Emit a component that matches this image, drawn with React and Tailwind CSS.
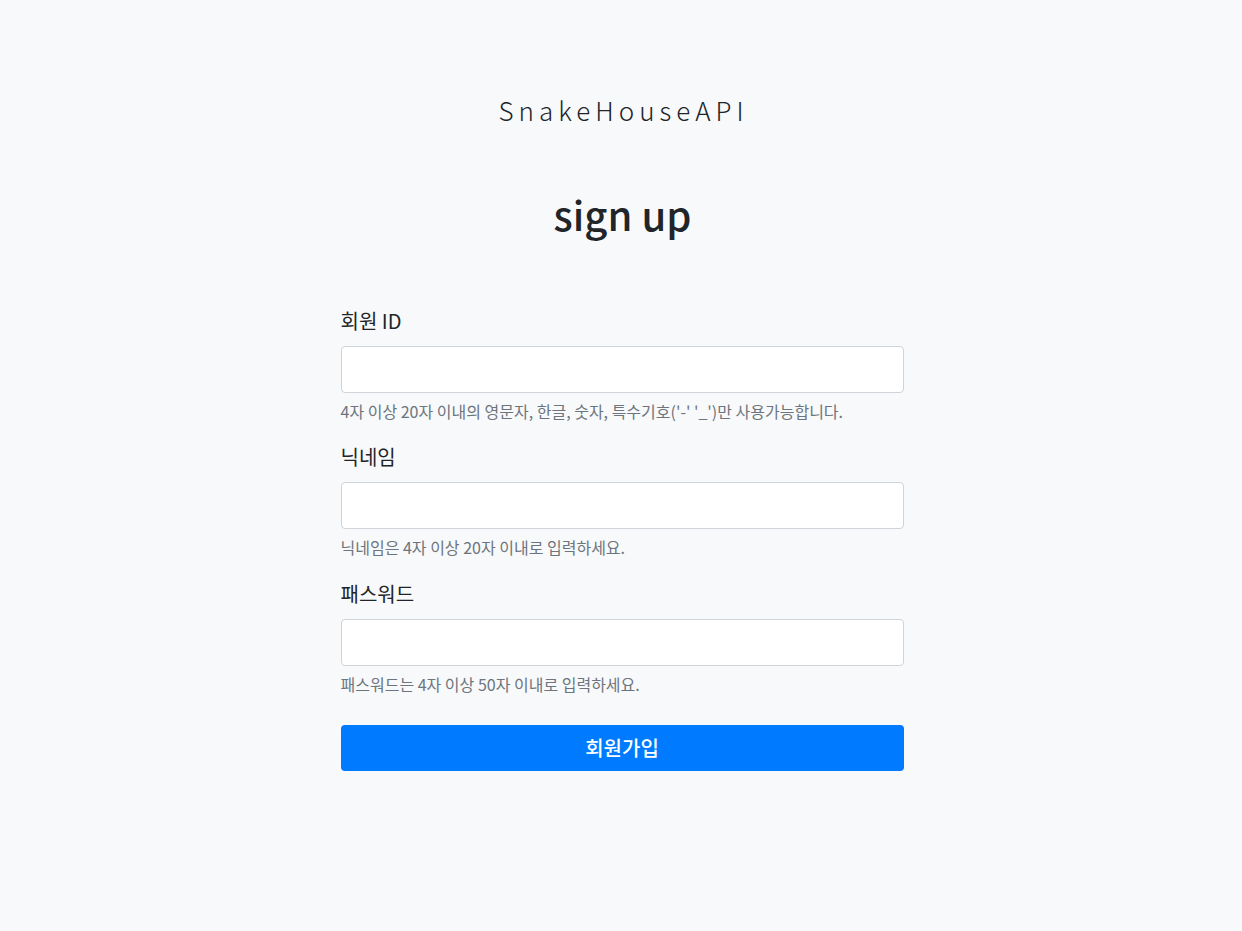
import React from "react"

const FONT = { fontFamily: '"Noto Sans CJK KR", "Noto Sans", sans-serif' }

// 입력 필드 한 묶음: 라벨, 인풋, 도움말
const Field = ({ label, help, type = "text", gap = "" }) => (
  <div className={gap}>
    <label className="block text-[20px] leading-[30px] text-[#212529]">{label}</label>
    <input
      type={type}
      className="mt-[10px] block h-[47px] w-full rounded-[4px] border border-[#ced4da] bg-white px-3 text-[16px] text-[#495057] outline-none"
    />
    <p className="mt-[6px] text-[16px] leading-[24px] text-[#6c757d]">{help}</p>
  </div>
)

export default function App() {
  return (
    <div className="min-h-screen bg-[#f8f9fa] pt-[90px]" style={FONT}>
      <div className="pl-[5px] text-center text-[26px] font-light leading-[40px] tracking-[5px] text-[#212529]">
        SnakeHouseAPI
      </div>
      <h1 className="mt-[60px] pl-[3px] text-center text-[40px] font-medium leading-[48px] text-[#212529]">sign up</h1>

      <form className="mx-auto mt-[68px] w-[563px] translate-x-[1px]" onSubmit={(e) => e.preventDefault()}>
        <Field label="회원 ID" help="4자 이상 20자 이내의 영문자, 한글, 숫자, 특수기호('-' '_')만 사용가능합니다." />
        <Field gap="mt-[19px]" label="닉네임" help="닉네임은 4자 이상 20자 이내로 입력하세요." />
        <Field gap="mt-[20px]" label="패스워드" type="password" help="패스워드는 4자 이상 50자 이내로 입력하세요." />
        <button
          type="submit"
          className="mt-[29px] flex h-[46px] w-full items-center justify-center rounded-[4px] bg-[#007bff] text-[20px] font-medium text-white"
        >
          회원가입
        </button>
      </form>
    </div>
  )
}
